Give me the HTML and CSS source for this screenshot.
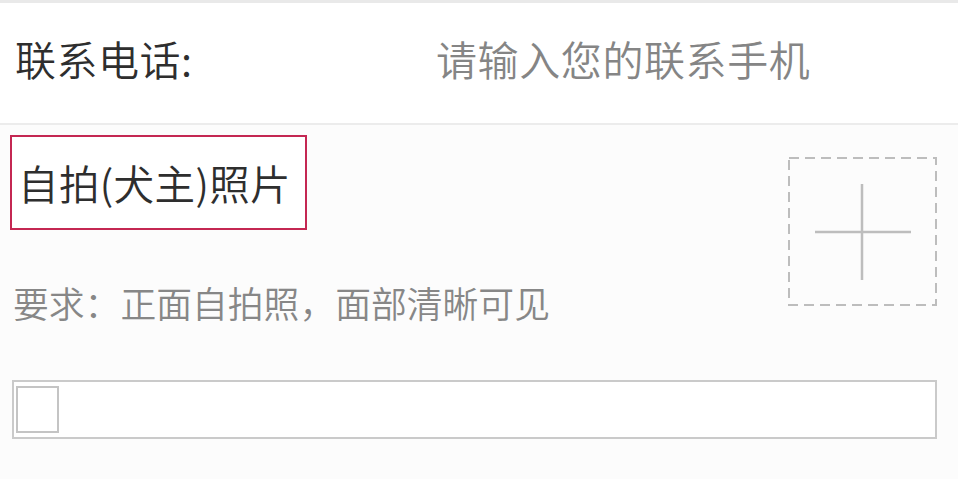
FILE: index.html
```html
<!DOCTYPE html>
<html lang="zh-CN">
<head>
<meta charset="utf-8">
<link rel="stylesheet" href="styles.css">
</head>
<body>
<div class="page">
  <div class="row phone">
    <span class="label">联系电话:</span>
    <span class="placeholder">请输入您的联系手机</span>
  </div>
  <div class="photo">
    <div class="photo-top">
      <div class="photo-left">
        <div class="title">自拍(犬主)照片</div>
        <div class="hint">要求：正面自拍照，面部清晰可见</div>
      </div>
      <div class="upload">
        <svg width="149" height="149" viewBox="0 0 149 149">
          <rect x="1" y="1" width="147" height="147" fill="none" stroke="#bdbdbd" stroke-width="2" stroke-dasharray="10 6"/>
          <line x1="27" y1="75" x2="123" y2="75" stroke="#bdbdbd" stroke-width="2.5"/>
          <line x1="74" y1="27" x2="74" y2="123" stroke="#bdbdbd" stroke-width="2.5"/>
        </svg>
      </div>
    </div>
    <div class="field">
      <span class="check"></span>
    </div>
  </div>
</div>
</body>
</html>
```
FILE: styles.css
```css
* { box-sizing: border-box; }
html, body { margin: 0; padding: 0; }
body {
  width: 958px;
  height: 479px;
  overflow: hidden;
  background: #fcfcfc;
  font-family: "Noto Sans CJK SC", "Noto Sans", sans-serif;
  font-weight: 350;
}
.page {
  border-top: 3px solid #e9e9e9;
}
.row {
  height: 122px;
  padding-bottom: 10px;
  background: #fff;
  display: flex;
  align-items: center;
  border-bottom: 2px solid #ececec;
}
.label {
  margin-left: 15px;
  font-size: 41px;
  color: #2e2e2e;
  width: 421px;
  letter-spacing: 0.5px;
}
.placeholder {
  font-size: 41px;
  color: #858585;
  letter-spacing: 0.6px;
}
.photo {
  padding: 10px 21px 0 10px;
}
.photo-top {
  display: flex;
  justify-content: space-between;
}
.photo-left {
  display: flex;
  flex-direction: column;
}
.title {
  width: 297px;
  height: 95px;
  border: 2.5px solid #c42752;
  font-size: 40.5px;
  color: #2e2e2e;
  padding: 6px 0 0 6px;
  line-height: 80px;
  letter-spacing: 0.4px;
  background: #fff;
}
.hint {
  margin-top: 47px;
  margin-left: 3px;
  font-size: 35.8px;
  color: #878787;
  line-height: 50px;
}
.upload {
  margin-top: 22px;
  width: 149px;
  height: 149px;
}
.upload svg { display: block; }
.field {
  margin-top: 53px;
  margin-left: 2px;
  height: 59px;
  border: 2px solid #cacaca;
  background: #fff;
  padding: 4px 2px;
}
.check {
  display: block;
  width: 43px;
  height: 47px;
  border: 2px solid #c4c4c4;
}
```
